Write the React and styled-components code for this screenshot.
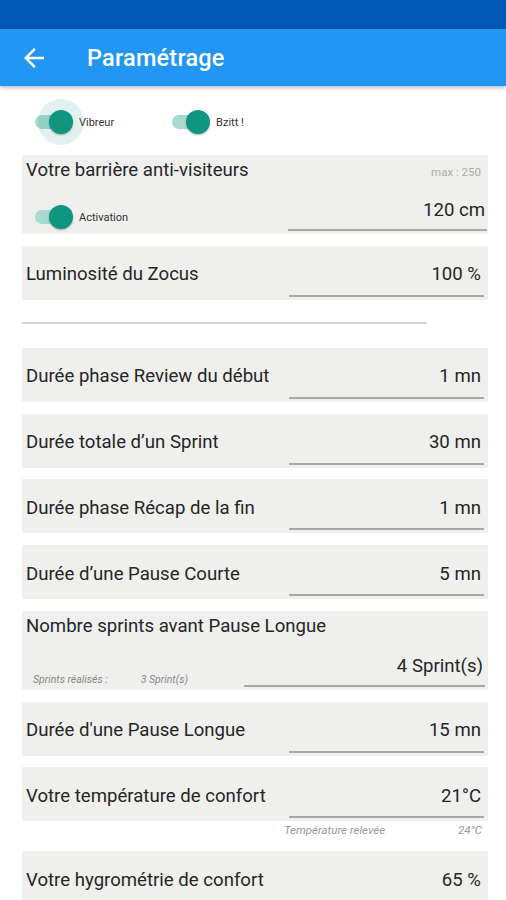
import React from 'react'
import styled, { createGlobalStyle } from 'styled-components'

const GlobalStyle = createGlobalStyle`
  body {
    margin: 0;
    background: #ffffff;
    font-family: Roboto, "Liberation Sans", sans-serif;
  }
`

const Page = styled.div`
  width: 506px;
  min-height: 900px;
  background: #fff;
  overflow: hidden;
`

const StatusBar = styled.div`
  height: 29px;
  background: #0358b7;
`

const AppBar = styled.div`
  height: 57px;
  background: #2196f3;
  display: flex;
  align-items: center;
  box-shadow: 0 2px 4px rgba(0, 0, 0, 0.25);
  position: relative;
  z-index: 1;
`

const BackButton = styled.div`
  width: 30px;
  height: 30px;
  margin-left: 19px;
  display: flex;
`

const Title = styled.h1`
  margin: 0 0 0 38px;
  color: #fff;
  font-size: 23.5px;
  font-weight: 500;
  letter-spacing: 0.2px;
`

const Content = styled.div`
  padding-top: 12px;
  display: flex;
  flex-direction: column;
  gap: 11.75px;
`

const ToggleRow = styled.div`
  height: 48px;
  margin-bottom: -2.75px;
  padding-left: 35px;
  display: flex;
  align-items: center;
  gap: 58px;
`

const ToggleItem = styled.div`
  display: flex;
  align-items: center;
  gap: 6px;
`

const SwitchBox = styled.div`
  position: relative;
  width: 38px;
  height: 24px;
  display: flex;
  align-items: center;
`

const Track = styled.div`
  width: 36px;
  height: 14px;
  border-radius: 7px;
  background: #a9d9d1;
`

const Ripple = styled.div`
  position: absolute;
  right: -11px;
  top: -11px;
  width: 46px;
  height: 46px;
  border-radius: 50%;
  background: rgba(15, 149, 128, 0.13);
`

const Thumb = styled.div`
  position: absolute;
  right: 0;
  top: 0;
  width: 24px;
  height: 24px;
  border-radius: 50%;
  background: #0f9580;
  box-shadow: 0 1px 2px rgba(0, 0, 0, 0.3);
`

const TinyLabel = styled.span`
  font-size: 11px;
  color: #333;
`

const Card = styled.div`
  margin: 0 18px 0 22px;
  background: #efefed;
  display: flex;
  flex-direction: ${p => (p.$stacked ? 'column' : 'row')};
  min-height: ${p => (p.$stacked ? 79 : 54)}px;
`

const Label = styled.div`
  flex: 1;
  padding-left: 4px;
  padding-top: ${p => (p.$top ? '4px' : '3px')};
  align-self: ${p => (p.$top ? 'flex-start' : 'center')};
  font-size: 18.6px;
  color: #262626;
  white-space: nowrap;
`

const Field = styled.div`
  width: ${p => p.$w || 195}px;
  margin-right: ${p => p.$mr ?? 4}px;
  margin-bottom: 3px;
  margin-left: auto;
  box-sizing: border-box;
  border-bottom: 2px solid #a8a8a6;
  display: flex;
  align-items: center;
  justify-content: flex-end;
  padding: ${p => p.$pad || '16px 3px 8px 0'};
  font-size: 18.6px;
  color: #262626;
`

const HeadLine = styled.div`
  display: flex;
  align-items: flex-start;
  justify-content: space-between;
`

const Hint = styled.span`
  font-size: 11.5px;
  color: #aaa;
  padding: 10px 7px 0 0;
`

const BottomLine = styled.div`
  display: flex;
  align-items: flex-end;
  justify-content: space-between;
  flex: 1;
`

const ActivationBox = styled.div`
  padding: 0 0 5px 13px;
  display: flex;
  align-items: center;
  gap: 6px;
`

const SubInfo = styled.div`
  padding: 0 0 4px 11px;
  display: flex;
  gap: 33px;
  font-size: 10.5px;
  font-style: italic;
  color: #888;
`

const Separator = styled.div`
  height: 2px;
  width: 405px;
  margin: 10px 0 12.5px 22px;
  background: #d6d6d4;
`

const Group = styled.div`
  display: flex;
  flex-direction: column;
`

const Caption = styled.div`
  height: 18px;
  display: flex;
  align-items: center;
  justify-content: space-between;
  padding-left: 284px;
  padding-right: 24px;
  font-size: 11.5px;
  font-style: italic;
  color: #999;
`

const Switch = ({ ripple }) => (
  <SwitchBox>
    <Track />
    {ripple && <Ripple />}
    <Thumb />
  </SwitchBox>
)

const simpleRows = [
  ['Durée phase Review du début', '1 mn'],
  ['Durée totale d\u2019un Sprint', '30 mn'],
  ['Durée phase Récap de la fin', '1 mn'],
  ['Durée d\u2019une Pause Courte', '5 mn'],
]

const SimpleCard = ({ label, value }) => (
  <Card>
    <Label>{label}</Label>
    <Field>{value}</Field>
  </Card>
)

const App = () => (
  <Page>
    <GlobalStyle />
    <StatusBar />
    <AppBar>
      <BackButton>
        <svg width="30" height="30" viewBox="0 0 24 24">
          <path fill="#fff" d="M20 11H7.83l5.59-5.59L12 4l-8 8 8 8 1.41-1.41L7.83 13H20v-2z" />
        </svg>
      </BackButton>
      <Title>Paramétrage</Title>
    </AppBar>
    <Content>
      <ToggleRow>
        <ToggleItem>
          <Switch ripple />
          <TinyLabel>Vibreur</TinyLabel>
        </ToggleItem>
        <ToggleItem>
          <Switch />
          <TinyLabel>Bzitt !</TinyLabel>
        </ToggleItem>
      </ToggleRow>

      <Card $stacked>
        <HeadLine>
          <Label $top>Votre barrière anti-visiteurs</Label>
          <Hint>max : 250</Hint>
        </HeadLine>
        <BottomLine>
          <ActivationBox>
            <Switch />
            <TinyLabel>Activation</TinyLabel>
          </ActivationBox>
          <Field $w={199} $mr={1} $pad="0 2px 8px 0">120 cm</Field>
        </BottomLine>
      </Card>

      <SimpleCard label="Luminosité du Zocus" value="100 %" />

      <Separator />

      {simpleRows.map(([l, v]) => (
        <SimpleCard key={l} label={l} value={v} />
      ))}

      <Card $stacked>
        <Label $top>Nombre sprints avant Pause Longue</Label>
        <BottomLine>
          <SubInfo>
            <span>Sprints réalisés :</span>
            <span>3 Sprint(s)</span>
          </SubInfo>
          <Field $w={241} $mr={3} $pad="0 2px 8px 0">4 Sprint(s)</Field>
        </BottomLine>
      </Card>

      <SimpleCard label="Durée d'une Pause Longue" value="15 mn" />

      <Group>
        <SimpleCard label="Votre température de confort" value="21°C" />
        <Caption>
          <span>Température relevée</span>
          <span>24°C</span>
        </Caption>
      </Group>

      <SimpleCard label="Votre hygrométrie de confort" value="65 %" />
    </Content>
  </Page>
)

export default App
